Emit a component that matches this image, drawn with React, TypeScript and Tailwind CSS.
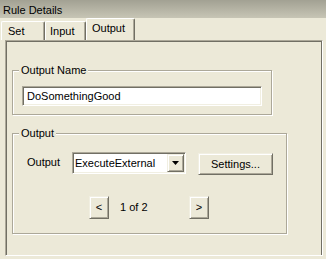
const raised =
  'border border-t-[#f1efe2] border-l-[#f1efe2] border-r-[#716f64] border-b-[#716f64] shadow-[inset_1px_1px_0_#ffffff,inset_-1px_-1px_0_#aca899] bg-[#ece9d8]';

const sunken =
  'border border-t-[#aca899] border-l-[#aca899] border-r-white border-b-white shadow-[inset_1px_1px_0_#716f64,inset_-1px_-1px_0_#f1efe2] bg-white';

const GroupBox = ({
  title,
  className,
  children,
}: {
  title: string;
  className: string;
  children: React.ReactNode;
}) => {
  return (
    <div
      className={`relative border border-[#aca899] shadow-[inset_1px_1px_0_#ffffff,1px_1px_0_#ffffff] ${className}`}>
      <span className="absolute -top-[7px] left-[6px] bg-[#ece9d8] px-[2px] leading-[13px]">
        {title}
      </span>
      {children}
    </div>
  );
};

const Tab = ({
  label,
  active,
  className,
}: {
  label: string;
  active?: boolean;
  className: string;
}) => {
  return (
    <div
      className={`flex items-center rounded-t-[2px] border-l border-t border-l-white border-t-white border-r border-r-[#716f64] shadow-[inset_-1px_0_0_#aca899] ${
        active ? 'h-[22px] pb-[2px]' : 'h-[19px]'
      } ${className}`}>
      {label}
    </div>
  );
};

export default function App() {
  return (
    <div className="flex h-[259px] w-[326px] flex-col overflow-hidden bg-[#ece9d8] font-['Liberation_Sans',Arial,sans-serif] text-[11px] text-black">
      <div className="h-[18px] bg-linear-to-b from-[#a2a193] to-[#c7c5b5] pl-[3px] pt-[1px] leading-[18px]">
        Rule Details
      </div>

      <div className="flex h-[22px] items-end">
        <Tab label="Set" className="ml-[1px] w-[44px] pl-[6px]" />
        <Tab label="Input" className="w-[41px] pl-[4px]" />
        <Tab label="Output" active className="w-[49px] pl-[5px]" />
      </div>

      <div className="ml-[5px] h-[216px] w-[318px] border border-l-[#aca899] border-t-[#aca899] border-r-white border-b-white shadow-[inset_1px_1px_0_#716f64,inset_-1px_0_0_#716f64]">
        <GroupBox
          title="Output Name"
          className="ml-[6px] mt-[29px] h-[45px] w-[260px] pl-[9px] pt-[15px]">
          <div className={`flex h-[20px] w-[240px] items-center pl-[4px] ${sunken}`}>
            DoSomethingGood
          </div>
        </GroupBox>

        <GroupBox
          title="Output"
          className="ml-[6px] mt-[18px] h-[101px] w-[275px] pl-[14px] pt-[18px]">
          <div className="flex items-start">
            <span className="w-[45px] pt-[4px] leading-[13px]">Output</span>
            <div className={`flex h-[22px] w-[114px] items-center justify-between pl-[2px] ${sunken}`}>
              <span>ExecuteExternal</span>
              <div className={`mr-[1px] flex h-[18px] w-[17px] items-center justify-center ${raised}`}>
                <svg width="7" height="4" viewBox="0 0 7 4">
                  <path d="M0 0h7L3.5 4z" fill="#000" />
                </svg>
              </div>
            </div>
            <button className={`ml-[12px] mt-[1px] h-[22px] w-[75px] ${raised}`}>
              Settings...
            </button>
          </div>

          <div className="ml-[62px] mt-[21px] flex items-center">
            <button className={`h-[23px] w-[20px] ${raised}`}>&lt;</button>
            <span className="w-[80px] pl-[11px]">1 of 2</span>
            <button className={`h-[23px] w-[20px] ${raised}`}>&gt;</button>
          </div>
        </GroupBox>
      </div>
    </div>
  );
}
